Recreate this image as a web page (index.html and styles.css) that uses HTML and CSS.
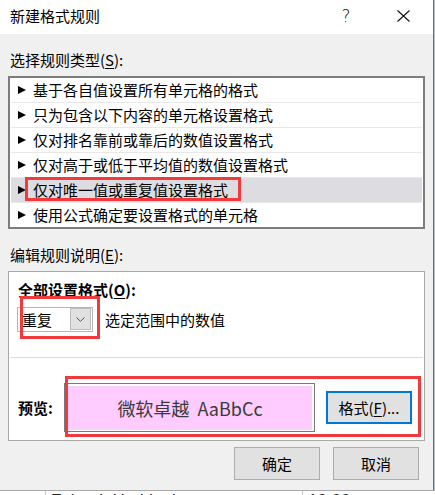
FILE: index.html
```html
<!DOCTYPE html>
<html lang="zh-CN">
<head>
<meta charset="utf-8">
<title>新建格式规则</title>
<link rel="stylesheet" href="styles.css">
</head>
<body>
<div class="screen">
  <div class="dialog">
    <div class="titlebar">
      <span class="title">新建格式规则</span>
      <span class="tb-btn help">?</span>
      <span class="tb-btn close"><svg width="13" height="12" viewBox="0 0 13 12"><path d="M0.5 0.5L12.5 11.5M12.5 0.5L0.5 11.5" stroke="#111" stroke-width="1.1" fill="none"/></svg></span>
    </div>
    <div class="content">
      <div class="label label-first">选择规则类型(<u>S</u>):</div>
      <ul class="rule-list">
        <li class="rule"><i class="tri"></i><span>基于各自值设置所有单元格的格式</span></li>
        <li class="rule"><i class="tri"></i><span>只为包含以下内容的单元格设置格式</span></li>
        <li class="rule"><i class="tri"></i><span>仅对排名靠前或靠后的数值设置格式</span></li>
        <li class="rule"><i class="tri"></i><span>仅对高于或低于平均值的数值设置格式</span></li>
        <li class="rule selected"><i class="tri"></i><span>仅对唯一值或重复值设置格式</span><b class="mark mark-rule"></b></li>
        <li class="rule"><i class="tri"></i><span>使用公式确定要设置格式的单元格</span></li>
      </ul>
      <div class="label label-second">编辑规则说明(<u>E</u>):</div>
      <div class="desc">
        <div class="desc-title">全部设置格式(<u>O</u>):</div>
        <div class="desc-row">
          <div class="select">
            <span class="select-text">重复</span>
            <span class="select-btn"><svg width="9" height="5" viewBox="0 0 9 5"><path d="M0.5 0.5L4.5 4.3L8.5 0.5" stroke="#555" stroke-width="1" fill="none"/></svg></span>
            <b class="mark mark-select"></b>
          </div>
          <span class="desc-text">选定范围中的数值</span>
        </div>
        <div class="desc-sep"></div>
        <div class="preview-row">
          <span class="preview-label">预览:</span>
          <div class="preview-box"><div class="preview-fill">微软卓越&nbsp;&nbsp;AaBbCc</div></div>
          <button class="btn btn-format">格式(<u>F</u>)...</button>
          <b class="mark mark-preview"></b>
        </div>
      </div>
      <div class="actions">
        <button class="btn">确定</button>
        <button class="btn">取消</button>
      </div>
    </div>
  </div>
  <div class="side"></div>
</div>
<div class="sheet-strip">
  <span class="cell cell-a">Fobank Haddoob</span>
  <span class="cell cell-b">10.00</span>
</div>
</body>
</html>
```
FILE: styles.css
```css
* { box-sizing: border-box; }
html, body { margin: 0; padding: 0; }
body {
  width: 435px;
  height: 495px;
  overflow: hidden;
  background: #ffffff;
  font-family: "Noto Sans CJK SC", "Microsoft YaHei", sans-serif;
  font-size: 15px;
  color: #000;
}
u { text-decoration: underline; text-underline-offset: 2px; }

.screen { display: flex; height: 490px; }
.dialog {
  width: 434px;
  height: 490px;
  background: #f0f0f0;
  border-right: 1px solid #6b6b6b;
  display: flex;
  flex-direction: column;
}
.side { width: 1px; background: #b8c0c8; }

.titlebar {
  height: 34px;
  background: #fff;
  display: flex;
  align-items: center;
  padding: 0 7px 3px 10px;
}
.title { font-size: 15px; line-height: 20px; }
.tb-btn {
  width: 46px;
  height: 20px;
  display: flex;
  align-items: center;
  justify-content: center;
}
.help {
  margin-left: auto;
  font-family: "DejaVu Sans", sans-serif;
  font-size: 17px;
  font-weight: 300;
  color: #111;
}
.close { margin-left: 11px; }

.content { padding: 0 8px; display: flex; flex-direction: column; }
.label { line-height: 20px; padding-left: 2px; }
.label-first { margin-top: 16px; }
.label-second { margin-top: 16px; }

.rule-list {
  margin: 6px 0 0;
  padding: 0 1px;
  list-style: none;
  background: #fff;
  border: 2px solid #7d7d7d;
}
.rule {
  position: relative;
  height: 25px;
  border-bottom: 1px solid #e8e8e8;
  display: flex;
  align-items: center;
  padding-left: 7px;
  line-height: 24px;
}
.rule:last-child { border-bottom: none; height: 24px; }
.rule.selected { background: #dddde1; }
.tri {
  width: 0;
  height: 0;
  border-left: 8px solid #000;
  border-top: 4.5px solid transparent;
  border-bottom: 4.5px solid transparent;
  margin-right: 7px;
}

.mark {
  position: absolute;
  border: 3px solid #f03a3c;
  pointer-events: none;
}
.mark-rule { left: 14px; top: -1px; width: 216px; height: 24px; }

.desc {
  margin-top: 6px;
  height: 170px;
  background: #fff;
  border: 1px solid #a8a8a8;
  padding-bottom: 7px;
}
.desc-title {
  margin: 8px 0 0 9px;
  line-height: 20px;
  font-weight: 700;
}
.desc-row {
  margin: 7px 0 0 8px;
  display: flex;
  align-items: center;
}
.select {
  position: relative;
  width: 76px;
  height: 25px;
  border: 1px solid #b4b4b4;
  display: flex;
  align-items: flex-start;
}
.select-text { padding-left: 4px; line-height: 23px; }
.select-btn {
  margin-left: auto;
  margin-right: 1px;
  width: 21px;
  height: 22px;
  background: #e1e1e1;
  border: 1px solid #bcbcbc;
  display: flex;
  align-items: center;
  justify-content: center;
}
.mark-select { left: 2px; top: -12px; width: 80px; height: 43px; }
.desc-text { margin-left: 12px; line-height: 20px; }

.desc-sep { margin: 25px 1px 0; height: 1px; background: #dcdcdc; }

.preview-row {
  position: relative;
  margin-top: 25px;
  height: 49px;
  display: flex;
  align-items: center;
}
.preview-label {
  width: 46px;
  margin-left: 9px;
  font-weight: 700;
  line-height: 20px;
}
.preview-box {
  width: 251px;
  height: 49px;
  border: 1px solid #7a7a7a;
  padding: 2px 2px 1px 3px;
  background: #fff;
}
.preview-fill {
  height: 100%;
  background: #ffccff;
  display: flex;
  align-items: center;
  justify-content: center;
  font-size: 18px;
  color: #3a3a3a;
}
.mark-preview { left: 56px; top: -7px; width: 356px; height: 61px; }

.btn {
  font-family: "Noto Sans CJK SC", "Microsoft YaHei", sans-serif;
  font-size: 15px;
  color: #000;
  width: 86px;
  height: 33px;
  padding: 0;
  background: #e1e1e1;
  border: 1px solid #adadad;
  display: flex;
  align-items: center;
  justify-content: center;
}
.btn-format { margin-left: 11px; border: 2px solid #0078d7; }

.actions {
  margin-top: 6px;
  padding-right: 6px;
  display: flex;
  justify-content: flex-end;
  gap: 13px;
}

.sheet-strip {
  height: 5px;
  overflow: hidden;
  display: flex;
  align-items: flex-start;
  background: #fff;
  border-top: 1px solid #a9a9a9;
}
.cell {
  font-family: "Liberation Sans", sans-serif;
  font-size: 17px;
  line-height: 17px;
  color: #222;
  padding-top: 1px;
}
.cell-a { margin-left: 45px; padding-left: 5px; width: 257px; border-left: 1px solid #c8c8c8; height: 5px; }
.cell-b { padding-left: 5px; border-left: 1px solid #c8c8c8; height: 5px; }
```
